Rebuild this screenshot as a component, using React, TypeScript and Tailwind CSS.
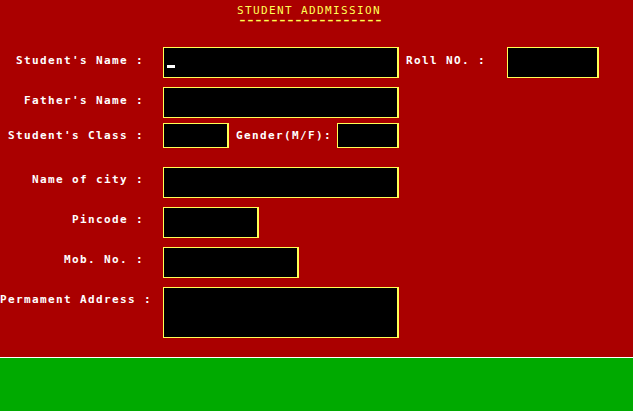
import React from 'react'

const mono = "font-['DejaVu_Sans_Mono',monospace] text-[11px] leading-[8px] tracking-[1.38px] whitespace-pre"
const font = `${mono} font-bold`

const Box = ({ w, h, children }: { w: string; h: string; children?: React.ReactNode }) => (
  <div className={`${w} ${h} shrink-0 bg-black border-t border-l border-b border-r-2 border-[#FFFF55]`}>
    {children}
  </div>
)

const Label = ({ text, w = 'w-[144px]', mt = 'mt-[10px]' }: { text: string; w?: string; mt?: string }) => (
  <div className={`${w} ${mt} shrink-0 text-right text-white ${font}`}>{text}</div>
)

export default function App() {
  return (
    <div className="w-[633px] h-[411px] flex flex-col overflow-hidden">
      <div className="h-[357px] bg-[#AA0000] flex flex-col">
        <div className={`ml-[237px] mt-[7px] text-[#FFFF55] ${mono}`}>STUDENT ADDMISSION</div>
        {/* underline row, drawn with hyphens like the old text-mode screen */}
        <div className="ml-[237px] h-[8px] text-[#FFFF55] font-['DejaVu_Sans_Mono',monospace] text-[18px] leading-[8px] tracking-[-2.84px] whitespace-pre">
          ------------------
        </div>

        <div className="flex mt-[24px]">
          <Label text="Student's Name :" />
          <div className="ml-[19px]">
            <Box w="w-[236px]" h="h-[31px]">
              <div className="ml-[3px] mt-[17px] w-[8px] h-[3px] bg-white" />
            </Box>
          </div>
          <Label text="Roll NO. :" w="w-[80px] ml-[7px] !text-left" />
          <div className="ml-[21px]">
            <Box w="w-[92px]" h="h-[31px]" />
          </div>
        </div>

        <div className="flex mt-[9px]">
          <Label text="Father's Name :" />
          <div className="ml-[19px]">
            <Box w="w-[236px]" h="h-[31px]" />
          </div>
        </div>

        <div className="flex mt-[5px]">
          <Label text="Student's Class :" mt="mt-[9px]" />
          <div className="ml-[19px]">
            <Box w="w-[66px]" h="h-[25px]" />
          </div>
          <Label text="Gender(M/F):" w="w-[96px] ml-[7px] !text-left" mt="mt-[9px]" />
          <div className="ml-[5px]">
            <Box w="w-[62px]" h="h-[25px]" />
          </div>
        </div>

        <div className="flex mt-[19px]">
          <Label text="Name of city :" mt="mt-[9px]" />
          <div className="ml-[19px]">
            <Box w="w-[236px]" h="h-[31px]" />
          </div>
        </div>

        <div className="flex mt-[9px]">
          <Label text="Pincode :" mt="mt-[9px]" />
          <div className="ml-[19px]">
            <Box w="w-[96px]" h="h-[31px]" />
          </div>
        </div>

        <div className="flex mt-[9px]">
          <Label text="Mob. No. :" mt="mt-[9px]" />
          <div className="ml-[19px]">
            <Box w="w-[136px]" h="h-[31px]" />
          </div>
        </div>

        <div className="flex mt-[9px]">
          <Label text="Permament Address :" w="w-[152px]" mt="mt-[9px]" />
          <div className="ml-[11px]">
            <Box w="w-[236px]" h="h-[51px]" />
          </div>
        </div>
      </div>
      <div className="h-[1px] bg-white" />
      <div className="flex-1 bg-[#00AA00]" />
    </div>
  )
}
